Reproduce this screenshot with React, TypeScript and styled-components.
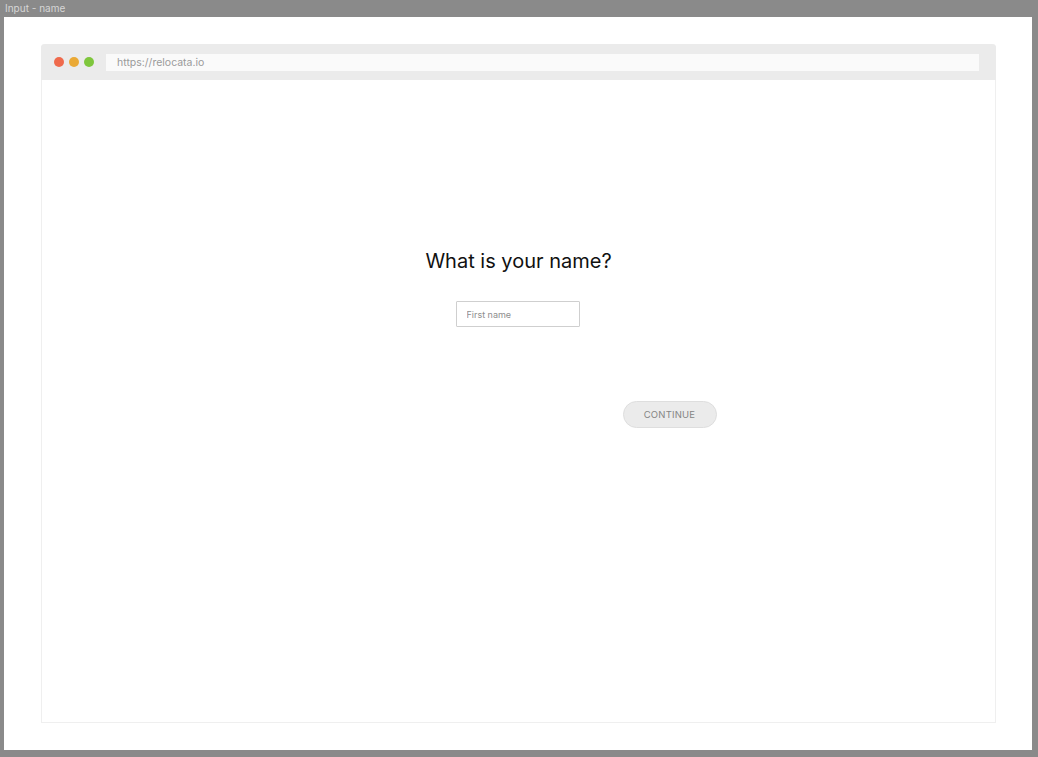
import styled, { createGlobalStyle } from "styled-components"

const Global = createGlobalStyle`
  html, body {
    margin: 0;
    padding: 0;
    background: #8a8a8a;
  }
  * { box-sizing: border-box; }
`

const Page = styled.div`
  width: 1038px;
  height: 757px;
  background: #8a8a8a;
  display: flex;
  flex-direction: column;
  font-family: Inter, "Liberation Sans", sans-serif;
`

const FrameLabel = styled.div`
  height: 17px;
  padding-left: 5px;
  font-size: 10px;
  line-height: 17px;
  color: #d6d6d6;
`

const Frame = styled.div`
  margin: 0 6px 0 4px;
  height: 733px;
  background: #fff;
  padding: 27px 36px 27px 37px;
  display: flex;
`

const Browser = styled.div`
  flex: 1;
  display: flex;
  flex-direction: column;
  border: 1px solid #efefef;
  border-top: none;
  border-radius: 4px 4px 0 0;
`

const TopBar = styled.div`
  height: 36px;
  background: #ebebeb;
  border-radius: 4px 4px 0 0;
  display: flex;
  align-items: center;
  padding: 0 17px 0 13px;
  margin: 0 -1px;
`

const Dots = styled.div`
  display: flex;
  gap: 5px;
  margin-right: 12px;
`

const Dot = styled.span<{ $c: string }>`
  width: 10px;
  height: 10px;
  border-radius: 50%;
  background: ${p => p.$c};
`

const Url = styled.div`
  flex: 1;
  height: 17px;
  background: #fafafa;
  font-size: 10.5px;
  line-height: 17px;
  color: #9a9a9a;
  padding-left: 11px;
`

const Content = styled.div`
  flex: 1;
  display: flex;
  flex-direction: column;
  align-items: center;
  padding-top: 167px;
`

const Heading = styled.h1`
  margin: 0;
  font-size: 20px;
  font-weight: 400;
  color: #111;
  line-height: 28px;
`

const Form = styled.div`
  width: 396px;
  display: flex;
  flex-direction: column;
  align-items: center;
`

const Input = styled.input`
  margin-top: 26px;
  margin-right: 2px;
  width: 124px;
  height: 26px;
  border: 1px solid #cfcfcf;
  border-radius: 1px;
  padding: 0 10px;
  font-family: Inter, "Liberation Sans", sans-serif;
  font-size: 9px;
  color: #333;
  outline: none;
  &::placeholder { color: #8e8e8e; }
`

const Button = styled.button`
  align-self: flex-end;
  margin-top: 74px;
  width: 94px;
  height: 27px;
  border-radius: 14px;
  background: #ebebeb;
  border: 1px solid #dedede;
  font-family: Inter, "Liberation Sans", sans-serif;
  font-size: 9.5px;
  letter-spacing: 0.2px;
  color: #858585;
  cursor: pointer;
`

const App = () => {
  return (
    <Page>
      <Global />
      <FrameLabel>Input - name</FrameLabel>
      <Frame>
        <Browser>
          <TopBar>
            <Dots>
              <Dot $c="#ef6a4c" />
              <Dot $c="#eaa935" />
              <Dot $c="#7ec63c" />
            </Dots>
            <Url>https://relocata.io</Url>
          </TopBar>
          <Content>
            <Heading>What is your name?</Heading>
            <Form>
              <Input placeholder="First name" />
              <Button>CONTINUE</Button>
            </Form>
          </Content>
        </Browser>
      </Frame>
    </Page>
  )
}

export default App
